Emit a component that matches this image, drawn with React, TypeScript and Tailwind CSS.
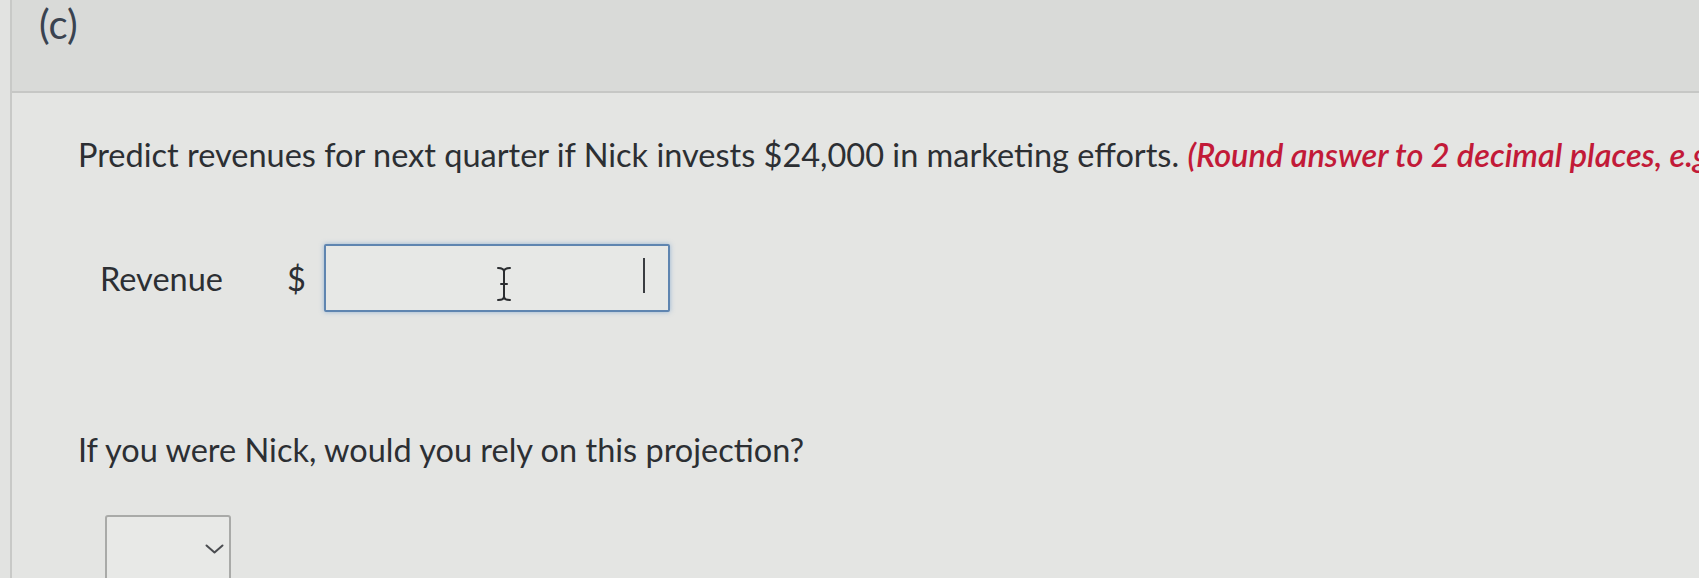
function IBeam() {
  return (
    <svg width="16" height="36" viewBox="0 0 16 36" fill="none" stroke="#2b2d30" strokeWidth="2" strokeLinecap="round">
      <path d="M2 2c3.5 0 6 1 6 3.5v25c0 2.5-2.5 3.5-6 3.5" />
      <path d="M14 2c-3.5 0-6 1-6 3.5v25c0 2.5 2.5 3.5 6 3.5" />
      <path d="M5 18h6" />
    </svg>
  );
}

function Chevron() {
  return (
    <svg width="19" height="10" viewBox="0 0 19 10" fill="none" stroke="#4a4c50" strokeWidth="2" strokeLinecap="round" strokeLinejoin="round">
      <path d="M1.5 1.5l8 7 8-7" />
    </svg>
  );
}

export default function App() {
  return (
    <div className="flex h-[578px] w-full overflow-hidden bg-[#e4e5e3] font-['Lato',sans-serif] text-[#2c2f33]">
      <div className="w-[12px] shrink-0 border-r-2 border-[#c8c9c7] bg-[#e2e3e1]" />
      <div className="flex min-w-0 flex-1 flex-col">
        <div className="h-[93px] shrink-0 border-b-2 border-[#c6c7c5] bg-[#d9dad8] pl-[27px]">
          <span className="text-[40px] leading-[48px] text-[#3a4350]">(c)</span>
        </div>

        <div className="flex flex-col pl-[66px] pt-[42px]">
          <p className="whitespace-nowrap text-[32.5px] leading-[39px]">
            Predict revenues for next quarter if Nick invests $24,000 in marketing efforts.{' '}
            <span className="font-semibold italic text-[#c21a38]">(Round answer to 2 decimal places, e.g. 25.25.)</span>
          </p>

          <div className="mt-[70px] flex items-center">
            <span className="ml-[22px] w-[187px] text-[32.5px] leading-[39px]">Revenue</span>
            <span className="w-[37px] text-[32.5px] leading-[39px]">$</span>
            <div className="flex h-[68px] w-[346px] items-center rounded-[2px] border-2 border-[#5f85b0] bg-[#e7e8e6] shadow-[0_0_5px_rgba(90,140,200,0.55)]">
              <div className="ml-[170px] mt-[12px]">
                <IBeam />
              </div>
              <div className="ml-[131px] mb-[6px] h-[35px] w-[2px] bg-[#3a3c40]" />
            </div>
          </div>

          <p className="mt-[118px] whitespace-nowrap text-[32.5px] leading-[39px]">
            If you were Nick, would you rely on this projection?
          </p>

          <div className="ml-[27px] mt-[46px] flex h-[72px] w-[126px] items-start justify-end rounded-[3px] border-2 border-[#a9aaa8] bg-[#e8e9e7] pr-[5px] pt-[27px]">
            <Chevron />
          </div>
        </div>
      </div>
    </div>
  );
}
